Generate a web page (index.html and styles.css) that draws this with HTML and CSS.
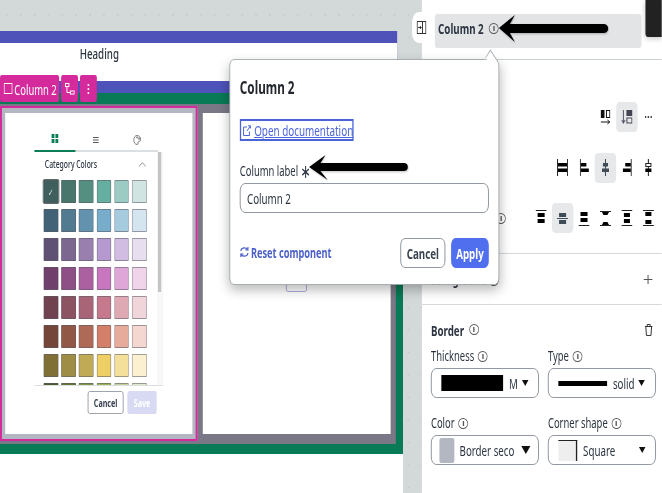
FILE: index.html
```html
<!DOCTYPE html>
<html lang="en">
<head>
    <meta charset="UTF-8">
    <title>Column 2 settings</title>
    <link rel="stylesheet" href="styles.css">
</head>
<body>
<div class="frame">
<div class="app">
    <!-- canvas -->
    <div class="canvas">
        <div class="blue-box">
            <div class="heading-box"><span class="heading-text">Heading</span></div>
        </div>
        <div class="green-box">
            <div class="gray-box">
                <div class="col-selected">
                    <div class="col-toolbar">
                        <div class="tool-btn tool-label"><span class="tool-square"></span>Column 2</div>
                        <div class="tool-btn tool-small">
                            <svg width="15" height="12" viewBox="0 0 10 12" preserveAspectRatio="none" fill="none" stroke="#fff" stroke-width="1"><rect x="0.5" y="0.5" width="3.5" height="3"/><rect x="5.5" y="8" width="4" height="3"/><path d="M2 3.5V9.5H5.5"/></svg>
                        </div>
                        <div class="tool-btn tool-small">
                            <svg width="6" height="12" viewBox="0 0 4 12" preserveAspectRatio="none" fill="#fff"><circle cx="2" cy="2" r="1"/><circle cx="2" cy="6" r="1"/><circle cx="2" cy="10" r="1"/></svg>
                        </div>
                    </div>
                    <div class="col-white palette">
                        <div class="palette-tabs">
                            <div class="palette-tab tab-active">
                                <svg width="11" height="9" viewBox="0 0 7 9" preserveAspectRatio="none" fill="#0b7d58"><rect width="3" height="4"/><rect x="4" width="3" height="4"/><rect y="5" width="3" height="4"/><rect x="4" y="5" width="3" height="4"/></svg>
                            </div>
                            <div class="palette-tab">
                                <svg width="9" height="6" viewBox="0 0 6 6" preserveAspectRatio="none" stroke="#555" stroke-width="1"><path d="M0 .5H6M0 3H6M0 5.5H6"/></svg>
                            </div>
                            <div class="palette-tab">
                                <svg width="12" height="10" viewBox="0 0 8 10" preserveAspectRatio="none" fill="none" stroke="#555" stroke-width=".8"><path d="M4 .5C6 .5 7.5 2.2 7.5 4.6 7.5 6.5 6 6.2 5.3 6.6 4.6 7.2 5.4 9.5 4 9.5 1.8 9.5.5 7.2.5 5 .5 2.4 2 .5 4 .5Z"/><circle cx="4" cy="2.4" r=".6"/><circle cx="6" cy="3.8" r=".6"/></svg>
                            </div>
                        </div>
                        <div class="palette-scroll">
                            <div class="palette-title">
                                <span>Category Colors</span>
                                <svg width="12" height="5" viewBox="0 0 8 5" preserveAspectRatio="none" fill="none" stroke="#777" stroke-width=".8"><path d="M.5 4.5 4 .7 7.5 4.5"/></svg>
                            </div>
                            <div class="swatches">
                                <div class="swatch swatch-on" style="background:#3e5f5c">✓</div>
                                <div class="swatch" style="background:#48766d"></div>
                                <div class="swatch" style="background:#548f82"></div>
                                <div class="swatch" style="background:#66aea0"></div>
                                <div class="swatch" style="background:#9ccbc3"></div>
                                <div class="swatch" style="background:#d0e5e1"></div>
                                <div class="swatch" style="background:#426377"></div>
                                <div class="swatch" style="background:#527a90"></div>
                                <div class="swatch" style="background:#6292ad"></div>
                                <div class="swatch" style="background:#77adcb"></div>
                                <div class="swatch" style="background:#a6cbdf"></div>
                                <div class="swatch" style="background:#d5e5ef"></div>
                                <div class="swatch" style="background:#5f5173"></div>
                                <div class="swatch" style="background:#7c6790"></div>
                                <div class="swatch" style="background:#987fae"></div>
                                <div class="swatch" style="background:#b699cf"></div>
                                <div class="swatch" style="background:#d1bde2"></div>
                                <div class="swatch" style="background:#e7deef"></div>
                                <div class="swatch" style="background:#703f6c"></div>
                                <div class="swatch" style="background:#8d4f85"></div>
                                <div class="swatch" style="background:#ab609f"></div>
                                <div class="swatch" style="background:#c876bd"></div>
                                <div class="swatch" style="background:#dfa7d7"></div>
                                <div class="swatch" style="background:#efd4ea"></div>
                                <div class="swatch" style="background:#714250"></div>
                                <div class="swatch" style="background:#8c5363"></div>
                                <div class="swatch" style="background:#a86578"></div>
                                <div class="swatch" style="background:#c6788c"></div>
                                <div class="swatch" style="background:#dfa9b4"></div>
                                <div class="swatch" style="background:#f0d6da"></div>
                                <div class="swatch" style="background:#744539"></div>
                                <div class="swatch" style="background:#915747"></div>
                                <div class="swatch" style="background:#ae6a57"></div>
                                <div class="swatch" style="background:#d47f69"></div>
                                <div class="swatch" style="background:#e7ab9c"></div>
                                <div class="swatch" style="background:#f3d7d0"></div>
                                <div class="swatch" style="background:#807036"></div>
                                <div class="swatch" style="background:#a08d45"></div>
                                <div class="swatch" style="background:#c0aa55"></div>
                                <div class="swatch" style="background:#eecf66"></div>
                                <div class="swatch" style="background:#f5e09b"></div>
                                <div class="swatch" style="background:#fbf0cf"></div>
                                <div class="swatch" style="background:#4d5a2b"></div>
                                <div class="swatch" style="background:#667637"></div>
                                <div class="swatch" style="background:#829545"></div>
                                <div class="swatch" style="background:#9cb153"></div>
                                <div class="swatch" style="background:#c4d299"></div>
                                <div class="swatch" style="background:#e2e9cb"></div>
                            </div>
                            <div class="palette-thumb"></div>
                        </div>
                        <div class="palette-actions">
                            <button class="small-btn small-cancel">Cancel</button>
                            <button class="small-btn small-save">Save</button>
                        </div>
                    </div>
                </div>
                <div class="col-plain">
                    <div class="add-btn"></div>
                </div>
            </div>
        </div>
        <div class="below"></div>
        <div class="panel-toggle">
            <svg width="15" height="13" viewBox="0 0 10 13" preserveAspectRatio="none" fill="none" stroke="#333" stroke-width="1"><rect x=".5" y=".5" width="9" height="12"/><path d="M6 .5V12.5M1.5 6.5H4.5M3.4 5 4.8 6.5 3.4 8"/></svg>
        </div>
    </div>

    <!-- right panel -->
    <div class="panel">
        <div class="panel-head">
            <div class="panel-title">
                <b>Column 2</b>
                <span class="info"></span>
            </div>
            <div class="black-corner"></div>
        </div>
        <div class="layout-section">
            <div class="icon-row">
                <div class="icon-btn">
                    <svg width="15" height="15" viewBox="0 0 10 15" preserveAspectRatio="none"><rect x="0" y="0" width="4" height="8" fill="#111"/><rect x="6" y=".5" width="3.5" height="7" fill="none" stroke="#111"/><path d="M0 12H9M7 10 9.5 12 7 14" stroke="#111" fill="none"/></svg>
                </div>
                <div class="icon-btn icon-on">
                    <svg width="17" height="14" viewBox="0 0 11 14" preserveAspectRatio="none"><path d="M2 0V12M.2 10 2 13 3.8 10" stroke="#556" fill="none"/><rect x="5" y="0" width="6" height="6" fill="#445"/><rect x="5.5" y="8" width="5" height="5" fill="none" stroke="#445"/></svg>
                </div>
                <div class="icon-btn">
                    <svg width="11" height="2" viewBox="0 0 7 2" preserveAspectRatio="none" fill="#444"><rect width="1.4" height="2"/><rect x="2.8" width="1.4" height="2"/><rect x="5.6" width="1.4" height="2"/></svg>
                </div>
            </div>
            <div class="icon-row">
                <div class="icon-btn">
                    <svg width="17" height="17" viewBox="0 0 11 17" preserveAspectRatio="none"><path d="M.5 0V17M10.5 0V17" stroke="#222"/><rect x="1" y="4" width="9" height="3.5"/><rect x="1" y="9.5" width="9" height="3.5"/></svg>
                </div>
                <div class="icon-btn">
                    <svg width="14" height="17" viewBox="0 0 9 17" preserveAspectRatio="none"><path d="M.5 0V17" stroke="#222"/><rect x="1" y="4" width="5.5" height="3.5"/><rect x="1" y="9.5" width="8" height="3.5"/></svg>
                </div>
                <div class="icon-btn icon-on">
                    <svg width="11" height="17" viewBox="0 0 7 17" preserveAspectRatio="none" fill="#3f4c58"><path d="M3.5 0V17" stroke="#3f4c58"/><rect x="1" y="4" width="5" height="3.5"/><rect y="9.5" width="7" height="3.5"/></svg>
                </div>
                <div class="icon-btn">
                    <svg width="14" height="17" viewBox="0 0 9 17" preserveAspectRatio="none"><path d="M8.5 0V17" stroke="#222"/><rect x="2.5" y="4" width="5.5" height="3.5"/><rect y="9.5" width="8" height="3.5"/></svg>
                </div>
                <div class="icon-btn">
                    <svg width="11" height="17" viewBox="0 0 7 17" preserveAspectRatio="none"><path d="M3.5 0V17" stroke="#222"/><rect x="1" y="4.5" width="5" height="3" fill="#fff" stroke="#222"/><rect x=".5" y="9.5" width="6" height="3.5"/></svg>
                </div>
            </div>
            <div class="icon-row icon-row-info">
                <span class="info row-info"></span>
                <div class="icon-btn">
                    <svg width="17" height="14" viewBox="0 0 11 14" preserveAspectRatio="none" class="up4"><path d="M0 .5H11" stroke="#222"/><rect x="2" y="3" width="7" height="4"/><rect x="2" y="9" width="7" height="4"/></svg>
                </div>
                <div class="icon-btn icon-on">
                    <svg width="17" height="13" viewBox="0 0 11 13" preserveAspectRatio="none" fill="#3f4c58"><path d="M0 6.5H11" stroke="#3f4c58"/><rect x="2" y="1" width="7" height="4"/><rect x="2" y="8" width="7" height="4"/></svg>
                </div>
                <div class="icon-btn">
                    <svg width="17" height="16" viewBox="0 0 11 16" preserveAspectRatio="none" class="down4"><rect x="2" y="1" width="7" height="4"/><rect x="2" y="7" width="7" height="4"/><path d="M0 14.5H11" stroke="#222"/></svg>
                </div>
                <div class="icon-btn">
                    <svg width="17" height="15" viewBox="0 0 11 15" preserveAspectRatio="none"><path d="M0 .5H11M0 14.5H11" stroke="#222"/><path d="M2 1H9L7.5 4H3.5ZM3.5 11H7.5L9 14H2Z"/></svg>
                </div>
                <div class="icon-btn">
                    <svg width="17" height="16" viewBox="0 0 11 16" preserveAspectRatio="none"><path d="M0 .5H11M0 15.5H11" stroke="#222"/><rect x="2.5" y="3" width="6" height="4"/><rect x="2.5" y="9" width="6" height="4"/></svg>
                </div>
                <div class="icon-btn">
                    <svg width="17" height="16" viewBox="0 0 11 16" preserveAspectRatio="none"><path d="M0 .5H11M0 15.5H11" stroke="#222"/><rect x="2.5" y="2" width="6" height="4"/><rect x="2.5" y="10" width="6" height="4"/></svg>
                </div>
            </div>
        </div>
        <div class="bg-section">
            <b class="bg-label">Background</b>
            <span class="info bg-info"></span>
            <svg class="plus" width="14" height="9" viewBox="0 0 9 9" preserveAspectRatio="none" stroke="#555" stroke-width="1"><path d="M4.5 0V9M0 4.5H9"/></svg>
        </div>
        <div class="border-section">
            <div class="border-title">
                <b>Border</b>
                <span class="info"></span>
                <svg class="trash" width="12" height="12" viewBox="0 0 8 12" preserveAspectRatio="none" fill="none" stroke="#333" stroke-width="1"><path d="M0 2.5H8M2.5 2.5V.5H5.5V2.5M1 2.5 1.7 11.5H6.3L7 2.5"/></svg>
            </div>
            <div class="field-grid">
                <div class="field">
                    <label>Thickness <span class="info"></span></label>
                    <div class="select">
                        <span class="thick-m"></span>
                        <span class="sel-text">M</span>
                        <span class="caret"></span>
                    </div>
                </div>
                <div class="field">
                    <label>Type <span class="info"></span></label>
                    <div class="select">
                        <span class="line-solid"></span>
                        <span class="sel-text">solid</span>
                        <span class="caret"></span>
                    </div>
                </div>
                <div class="field">
                    <label>Color <span class="info"></span></label>
                    <div class="select sel-color">
                        <span class="color-chip"></span>
                        <span class="sel-text">Border seco</span>
                        <span class="caret caret-big"></span>
                    </div>
                </div>
                <div class="field">
                    <label>Corner shape <span class="info"></span></label>
                    <div class="select sel-corner">
                        <span class="corner-chip"></span>
                        <span class="sel-text sel-grow">Square</span>
                        <span class="caret"></span>
                    </div>
                </div>
            </div>
        </div>
    </div>

    <!-- popover -->
    <div class="popover">
        <div class="pop-notch"></div>
        <div class="pop-title">Column 2</div>
        <a class="pop-link">
            <svg width="12" height="11" viewBox="0 0 8 11" preserveAspectRatio="none" fill="none" stroke="#4a63d9" stroke-width="1"><path d="M4 2H.5V10.5H6.5V6.5M4 6 7.5 1M5 .8H7.5V3.5"/></svg>
            Open documentation
        </a>
        <label class="pop-label">Column label <span class="req">∗</span></label>
        <div class="pop-input">Column 2</div>
        <div class="pop-foot">
            <div class="pop-reset">
                <svg width="14" height="12" viewBox="0 0 9 12" preserveAspectRatio="none" fill="none" stroke="#4a5fc9" stroke-width="1.2"><path d="M1 5C1.3 3 2.8 1.8 4.5 1.8 5.8 1.8 7 2.4 7.7 3.4M8 7C7.7 9 6.2 10.2 4.5 10.2 3.2 10.2 2 9.6 1.3 8.6"/><path d="M8 1V3.8H5.5M1 11V8.2H3.5"/></svg>
                Reset component
            </div>
            <button class="pop-btn pop-cancel">Cancel</button>
            <button class="pop-btn pop-apply">Apply</button>
        </div>
    </div>

    <!-- annotation arrows -->
    <svg class="arrow arrow-top" width="172" height="30" viewBox="0 0 112 30" preserveAspectRatio="none">
        <path d="M1 14 17 1 12 10H106A4.5 4.5 0 0 1 106 19H12L17 28Z" fill="#000"/>
    </svg>
    <svg class="arrow arrow-mid" width="155" height="27" viewBox="0 0 98 27" preserveAspectRatio="none">
        <path d="M1 13 17 1 12 9H93A4 4 0 0 1 93 17H12L19 26Z" fill="#000"/>
    </svg>
</div>
</div>
</body>
</html>
```

FILE: styles.css
```css
* {
    box-sizing: border-box;
}

html, body {
    margin: 0;
    padding: 0;
    overflow: hidden;
}

body {
    font-family: "Noto Sans", sans-serif;
    color: #2b3440;
    background: #fff;
}

.frame {
    width: 662px;
    height: 493px;
    overflow: hidden;
}

/* The reference is a wide page squeezed into 662px */
.app {
    position: relative;
    display: flex;
    width: 1018px;
    height: 493px;
    transform: scaleX(0.65);
    transform-origin: 0 0;
}

/* canvas */
.canvas {
    position: relative;
    display: flex;
    flex-direction: column;
    width: 649px;
    height: 493px;
    padding-top: 31px;
    background-color: #d3d8d8;
    background-image: radial-gradient(circle, #c2c9c9 1px, transparent 1.3px);
    background-size: 21.3px 22.5px;
    background-position: 0 3.75px;
}

.blue-box {
    width: 611px;
    height: 62px;
    padding: 12px 0;
    background: #4f52b9;
}

.heading-box {
    height: 38px;
    padding-right: 50%;
    background: #fff;
    text-align: center;
    font-size: 15px;
    line-height: 20px;
    font-weight: 500;
}

.green-box {
    width: 620px;
    height: 361px;
    padding: 11px 11px 10px 0;
    background: #087a55;
}

.gray-box {
    display: flex;
    height: 340px;
    padding: 2px 0 3px;
    background: #7a7886;
}

.col-selected {
    position: relative;
    width: 304px;
    padding: 5px;
    border: 2px solid #d42a9c;
    border-left-width: 3px;
    border-right-width: 3px;
    background: #b3b7c2;
}

.col-plain {
    position: relative;
    flex: 1;
    margin: 7px 8px;
    background: #fff;
}

.col-white {
    height: 100%;
    background: #fff;
}

.below {
    width: 620px;
    flex: 1;
    background: #fff;
}

/* pink toolbar on the column */
.col-toolbar {
    position: absolute;
    left: -3px;
    top: -33px;
    display: flex;
    gap: 3px;
}

.tool-btn {
    display: flex;
    align-items: center;
    justify-content: center;
    height: 27px;
    background: #d42a9c;
    border-radius: 3px;
    color: #fff;
    font-size: 14.5px;
    white-space: nowrap;
}

.tool-label {
    justify-content: flex-start;
    width: 91px;
    gap: 3px;
    padding-left: 6px;
}

.tool-square {
    width: 13px;
    height: 11px;
    border: 1px solid #fff;
}

.tool-small {
    width: 26px;
}

/* colour palette */
.palette {
    padding: 14px 0 0 45px;
}

.palette-tabs {
    display: flex;
    width: 190px;
    height: 25px;
    border-bottom: 2px solid #dcdfe2;
}

.palette-tab {
    display: flex;
    flex: 1;
    align-items: center;
    justify-content: center;
    height: 25px;
}

.tab-active {
    border-bottom: 2px solid #0b7d58;
}

.palette-scroll {
    position: relative;
    width: 198px;
    height: 234px;
    padding-left: 14px;
    overflow: hidden;
    border-bottom: 1px solid #dcdfe2;
    background: linear-gradient(to right, #fff 188px, #f8f8f8 188px);
}

.palette-title {
    display: flex;
    justify-content: space-between;
    align-items: center;
    width: 158px;
    height: 28px;
    padding: 0 0 4px 2px;
    font-size: 10.5px;
    font-weight: 500;
}

.palette-thumb {
    position: absolute;
    right: 3px;
    top: 0;
    width: 5px;
    height: 140px;
    background: #c4c4c4;
}

.swatches {
    display: grid;
    grid-template-columns: repeat(6, 22.6px);
    grid-auto-rows: 23px;
    gap: 6px 4.6px;
}

.swatch {
    border: 1px solid rgba(90, 90, 100, 0.55);
    border-radius: 1px;
}

.swatch-on {
    display: flex;
    align-items: center;
    justify-content: center;
    outline: 1px solid #3a4a4a;
    color: #d8e2e0;
    font-size: 10px;
}

.palette-actions {
    display: flex;
    justify-content: flex-end;
    gap: 6px;
    width: 188px;
    margin-top: 5px;
}

.small-btn {
    height: 23px;
    padding: 0;
    border-radius: 3px;
    font-family: inherit;
    font-size: 11px;
    font-weight: bold;
}

.small-cancel {
    width: 55px;
    background: #fff;
    border: 1px solid #8a8f99;
    color: #3a4350;
}

.small-save {
    width: 45px;
    background: #d8d9f2;
    border: 0;
    color: #fff;
}

.add-btn {
    position: absolute;
    left: 128px;
    top: 165px;
    width: 32px;
    height: 14px;
    border: 1px solid #9d9cd8;
    border-radius: 3px;
}

.panel-toggle {
    position: absolute;
    left: 634px;
    top: 12px;
    display: flex;
    align-items: center;
    justify-content: center;
    width: 28px;
    height: 31px;
    background: #fff;
    border-radius: 10px;
    z-index: 2;
}

/* right panel */
.panel {
    width: 369px;
    height: 493px;
    background: #fff;
    font-size: 14px;
}

.panel-head {
    position: relative;
    height: 60px;
    padding: 14px 31px 0 20px;
    border-bottom: 1px solid #c9d0d0;
}

.panel-title {
    display: flex;
    align-items: center;
    gap: 8px;
    height: 34px;
    padding: 0 0 6px 5px;
    background: #e2e4e6;
    border-radius: 4px;
    font-size: 15px;
}

.black-corner {
    position: absolute;
    right: 0;
    top: 0;
    width: 25px;
    height: 37px;
    background: #222;
    border-radius: 0 0 0 4px;
    box-shadow: 0 2px 6px rgba(0, 0, 0, 0.2);
}

.info {
    display: inline-block;
    width: 15px;
    height: 11px;
    border: 1px solid #555;
    border-radius: 50%;
    background: linear-gradient(#555, #555) center / 2px 5px no-repeat;
}

.layout-section {
    display: flex;
    flex-direction: column;
    gap: 20.5px;
    height: 194px;
    padding: 42px 4px 0 0;
    border-bottom: 1px solid #d3d8dc;
}

.icon-row {
    display: flex;
    justify-content: flex-end;
}

.icon-row-info {
    align-items: center;
}

.row-info {
    margin: 0 auto 0 114px;
}

.icon-btn {
    display: flex;
    align-items: center;
    justify-content: center;
    width: 33px;
    height: 30px;
    border-radius: 5px;
}

.icon-on {
    background: #e6e8ea;
}

.up4 {
    margin-bottom: 2px;
}

.down4 {
    margin-top: 2px;
}

.bg-section {
    display: flex;
    align-items: center;
    gap: 5px;
    height: 51px;
    padding: 0 14px;
    border-bottom: 1px solid #d3d8dc;
    font-size: 14px;
}

.bg-label {
    margin-top: 1px;
}

.bg-info {
    margin-top: 3px;
}

.bg-section .plus {
    margin-left: auto;
}

.border-section {
    padding: 16px 9px 0 14px;
}

.border-title {
    display: flex;
    align-items: center;
    gap: 8px;
    height: 17px;
    margin-bottom: 8px;
    font-size: 15px;
}

.trash {
    margin-left: auto;
    margin-right: 5px;
}

.field-grid {
    display: grid;
    grid-template-columns: 166px 166px;
    column-gap: 14px;
    row-gap: 15px;
}

.field label {
    display: block;
    height: 22px;
    font-size: 14.5px;
    line-height: 18px;
}

.field label .info {
    margin-left: 2px;
    vertical-align: -1px;
}

.select {
    display: flex;
    align-items: center;
    height: 30px;
    padding: 0 15px;
    border: 1px solid #7a828a;
    border-radius: 8px;
    font-size: 15px;
    white-space: nowrap;
}

.thick-m {
    width: 95px;
    height: 16px;
    margin-right: 9px;
    background: #000;
}

.line-solid {
    width: 75px;
    height: 5px;
    margin-right: 9px;
    background: #000;
}

.caret {
    width: 0;
    height: 0;
    margin-left: 6px;
    border-left: 5px solid transparent;
    border-right: 5px solid transparent;
    border-top: 6px solid #111;
}

.caret-big {
    margin-left: auto;
    border-left-width: 7px;
    border-right-width: 7px;
    border-top-width: 8px;
}

.sel-color {
    padding: 0 12px;
}

.color-chip {
    width: 23px;
    height: 25px;
    margin-right: 8px;
    background: #b3b7c2;
    border-radius: 3px;
}

.corner-chip {
    width: 29px;
    height: 21px;
    margin-right: 9px;
    background: #eee;
    border-top: 1px solid #222;
    border-right: 2px solid #222;
}

.sel-grow {
    flex: 1;
}

/* popover */
.popover {
    position: absolute;
    left: 353px;
    top: 59px;
    width: 415px;
    height: 226px;
    padding: 15px 15px 0 15px;
    background: #fff;
    border: 1.5px solid #9aa3a8;
    border-top-width: 1px;
    border-radius: 7px;
    box-shadow: 0 5px 14px rgba(0, 0, 0, 0.28);
    z-index: 3;
}

.pop-notch {
    position: absolute;
    right: 2px;
    top: -6px;
    width: 17px;
    height: 11px;
    background: #fff;
    border-top: 1px solid #9aa3a8;
    border-left: 1px solid #9aa3a8;
    transform: rotate(45deg);
}

.pop-title {
    height: 26px;
    font-size: 18px;
    line-height: 24px;
    font-weight: bold;
    color: #23282e;
}

.pop-link {
    display: flex;
    align-items: center;
    gap: 5px;
    width: 175px;
    height: 22px;
    margin-top: 18px;
    padding-left: 3px;
    border: 2px solid #4a63d9;
    color: #4a63d9;
    font-size: 15.2px;
    text-decoration: underline;
    white-space: nowrap;
}

.pop-link svg {
    flex: none;
}

.pop-label {
    display: block;
    height: 18px;
    margin-top: 20px;
    font-size: 14.5px;
    line-height: 18px;
}

.req {
    font-family: "DejaVu Sans", sans-serif;
    font-size: 19px;
    line-height: 14px;
    vertical-align: -2px;
}

.pop-input {
    height: 30px;
    margin-top: 4px;
    padding-left: 10px;
    border: 1px solid #7a828a;
    border-radius: 8px;
    font-size: 15px;
    line-height: 28px;
}

.pop-foot {
    display: flex;
    align-items: center;
    gap: 9px;
    margin-top: 25px;
}

.pop-reset {
    display: flex;
    align-items: center;
    gap: 3px;
    flex: 1;
    padding-bottom: 2px;
    color: #4a5fc9;
    font-size: 14.2px;
    font-weight: bold;
}

.pop-btn {
    height: 30px;
    padding: 0;
    border-radius: 7px;
    font-family: inherit;
    font-size: 15px;
    font-weight: bold;
}

.pop-cancel {
    width: 69px;
    background: #fff;
    border: 1px solid #7a828a;
    color: #3a4350;
}

.pop-apply {
    width: 58px;
    background: #4f6fee;
    border: 0;
    color: #fff;
}

/* annotation arrows */
.arrow {
    position: absolute;
    z-index: 4;
    filter: drop-shadow(1px 1px 1px rgba(0, 0, 0, 0.25));
}

.arrow-top {
    left: 766px;
    top: 14px;
}

.arrow-mid {
    left: 474px;
    top: 154px;
}
```
